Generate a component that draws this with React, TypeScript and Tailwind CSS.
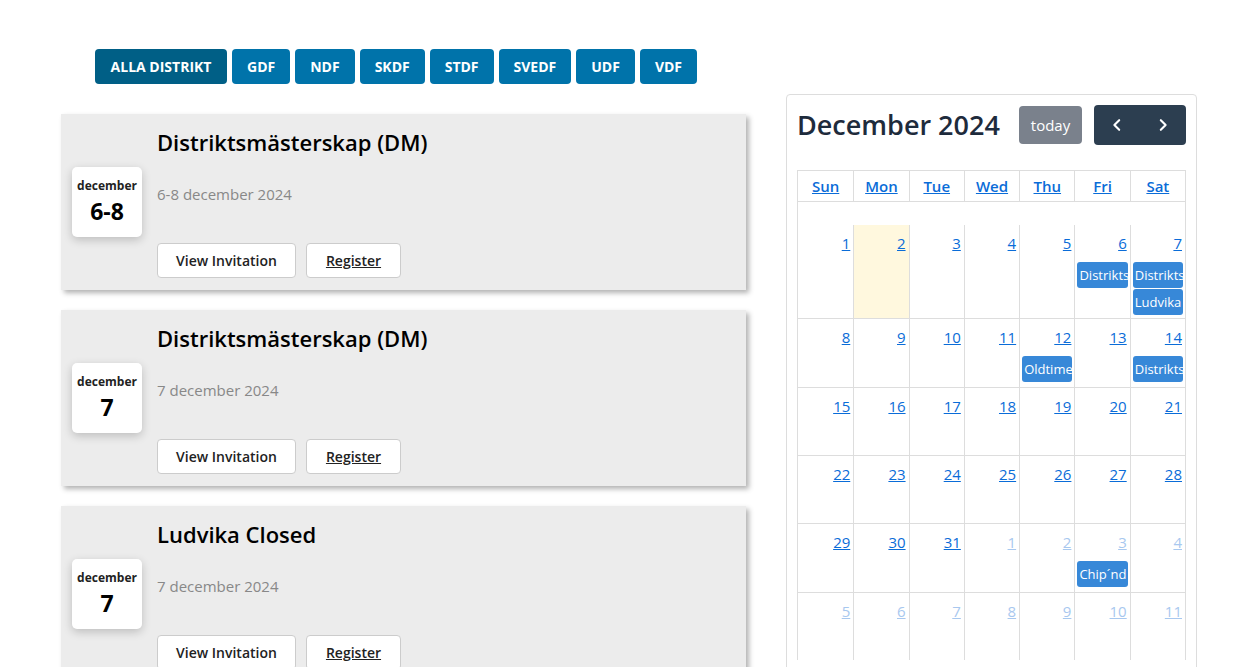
import React from 'react';

const districts = ['ALLA DISTRIKT', 'GDF', 'NDF', 'SKDF', 'STDF', 'SVEDF', 'UDF', 'VDF'];

type Event = { month: string; day: string; title: string; date: string };

const events: Event[] = [
    { month: 'december', day: '6-8', title: 'Distriktsmästerskap (DM)', date: '6-8 december 2024' },
    { month: 'december', day: '7', title: 'Distriktsmästerskap (DM)', date: '7 december 2024' },
    { month: 'december', day: '7', title: 'Ludvika Closed', date: '7 december 2024' },
];

type Cell = { n: number; other?: boolean; today?: boolean; ev?: string[] };

const weeks: Cell[][] = [
    [{ n: 1 }, { n: 2, today: true }, { n: 3 }, { n: 4 }, { n: 5 }, { n: 6, ev: ['Distriktsmästerskap'] }, { n: 7, ev: ['Distriktsmästerskap', 'Ludvika Closed'] }],
    [{ n: 8 }, { n: 9 }, { n: 10 }, { n: 11 }, { n: 12, ev: ['Oldtimers'] }, { n: 13 }, { n: 14, ev: ['Distriktsmästerskap'] }],
    [{ n: 15 }, { n: 16 }, { n: 17 }, { n: 18 }, { n: 19 }, { n: 20 }, { n: 21 }],
    [{ n: 22 }, { n: 23 }, { n: 24 }, { n: 25 }, { n: 26 }, { n: 27 }, { n: 28 }],
    [{ n: 29 }, { n: 30 }, { n: 31 }, { n: 1, other: true }, { n: 2, other: true }, { n: 3, other: true, ev: ['Chip´nd Putt'] }, { n: 4, other: true }],
    [{ n: 5, other: true }, { n: 6, other: true }, { n: 7, other: true }, { n: 8, other: true }, { n: 9, other: true }, { n: 10, other: true }, { n: 11, other: true }],
];

const rowHeights = ['h-[93px]', 'h-[69px]', 'h-[68px]', 'h-[68px]', 'h-[69px]', 'h-[68px]'];

const EventCard: React.FC<{ e: Event }> = ({ e }) => (
    <div className="flex items-center bg-[#ececec] h-[176px] shadow-[3px_3px_5px_rgba(0,0,0,0.3)] pl-[11px]">
        <div className="w-[70px] h-[70px] bg-white rounded-[5px] shadow-[0_3px_10px_rgba(0,0,0,0.2)] flex flex-col items-center justify-center shrink-0">
            <span className="text-[12px] font-bold text-[#222] leading-[14px]">{e.month}</span>
            <span className="text-[23px] font-bold text-black leading-[30px] mt-[3px]">{e.day}</span>
        </div>
        <div className="flex flex-col h-full pl-[15px] pt-[12px] pb-[12px]">
            <h2 className="text-[22px] text-black leading-[32px] font-semibold">{e.title}</h2>
            <p className="text-[15px] text-[#888] mt-[26px] leading-[20px]">{e.date}</p>
            <div className="flex gap-[10px] mt-auto">
                <button className="w-[139px] h-[35px] bg-white border border-[#ccc] rounded-[4px] text-[14px] font-semibold text-[#222]">View Invitation</button>
                <button className="w-[95px] h-[35px] bg-white border border-[#ccc] rounded-[4px] text-[14px] font-semibold text-[#222] underline">Register</button>
            </div>
        </div>
    </div>
);

export default function App() {
    return (
        <div className="min-h-screen bg-white pt-[49px] font-['Open_Sans',sans-serif]">
            <div className="flex gap-[5px] pl-[95px]">
                {districts.map((d, i) => (
                    <button
                        key={d}
                        className={`h-[35px] rounded-[4px] text-white text-[14px] font-bold ${i === 0 ? 'bg-[#005f86] w-[132px]' : 'bg-[#0073aa] px-[15px]'}`}
                    >
                        {d}
                    </button>
                ))}
            </div>

            <div className="flex mt-[10px] pl-[61px] gap-[40px]">
                <div className="w-[685px] pt-[20px] flex flex-col gap-[20px]">
                    {events.map((e, i) => <EventCard key={i} e={e} />)}
                </div>

                <div className="w-[411px] h-[600px] border border-[#ddd] rounded-[4px] px-[10px] pt-[10px]">
                    <div className="flex items-center h-[40px]">
                        <h1 className="text-[27px] font-semibold text-[#1e2b3c] flex-1">December 2024</h1>
                        <button className="h-[38px] w-[63px] bg-[#7a818c] text-white rounded-[4px] text-[15px]">today</button>
                        <div className="flex h-[40px] ml-[12px] bg-[#2c3e50] rounded-[4px] text-white">
                            <button className="w-[46px] flex items-center justify-center">
                                <svg width="14" height="14" viewBox="0 0 16 16" fill="none" stroke="currentColor" strokeWidth="2.4" strokeLinecap="round" strokeLinejoin="round"><path d="M10.5 2.5 5 8l5.5 5.5" /></svg>
                            </button>
                            <button className="w-[46px] flex items-center justify-center">
                                <svg width="14" height="14" viewBox="0 0 16 16" fill="none" stroke="currentColor" strokeWidth="2.4" strokeLinecap="round" strokeLinejoin="round"><path d="M5.5 2.5 11 8l-5.5 5.5" /></svg>
                            </button>
                        </div>
                    </div>

                    <div className="mt-[25px] border border-[#ddd] border-b-0">
                        <div className="grid grid-cols-7 h-[31px] border-b border-[#ddd]">
                            {['Sun', 'Mon', 'Tue', 'Wed', 'Thu', 'Fri', 'Sat'].map((d, i) => (
                                <div key={d} className={`flex items-center justify-center text-[15px] font-semibold text-[#0a6cd8] underline ${i > 0 ? 'border-l border-[#ddd]' : ''}`}>{d}</div>
                            ))}
                        </div>
                        <div className="h-[23px]" />
                        {weeks.map((w, wi) => (
                            <div key={wi} className={`grid grid-cols-7 ${rowHeights[wi]} ${wi > 0 ? 'border-t border-[#ddd]' : ''}`}>
                                {w.map((c, ci) => (
                                    <div key={ci} className={`flex flex-col pt-[8px] ${ci > 0 ? 'border-l border-[#ddd]' : ''} ${c.today ? 'bg-[#fff8de]' : ''}`}>
                                        <span className={`text-right pr-[3px] text-[15px] leading-[20px] underline ${c.other ? 'text-[#a8c8ef]' : 'text-[#0a6cd8]'}`}>{c.n}</span>
                                        <div className="flex flex-col gap-[1px] mt-[9px] px-[2px]">
                                            {c.ev?.map((t, ti) => (
                                                <div key={ti} className="h-[26px] bg-[#3788d8] rounded-[3px] text-white text-[13px] leading-[26px] pl-[2px] overflow-hidden whitespace-nowrap text-clip">{t}</div>
                                            ))}
                                        </div>
                                    </div>
                                ))}
                            </div>
                        ))}
                    </div>
                </div>
            </div>
        </div>
    );
}
